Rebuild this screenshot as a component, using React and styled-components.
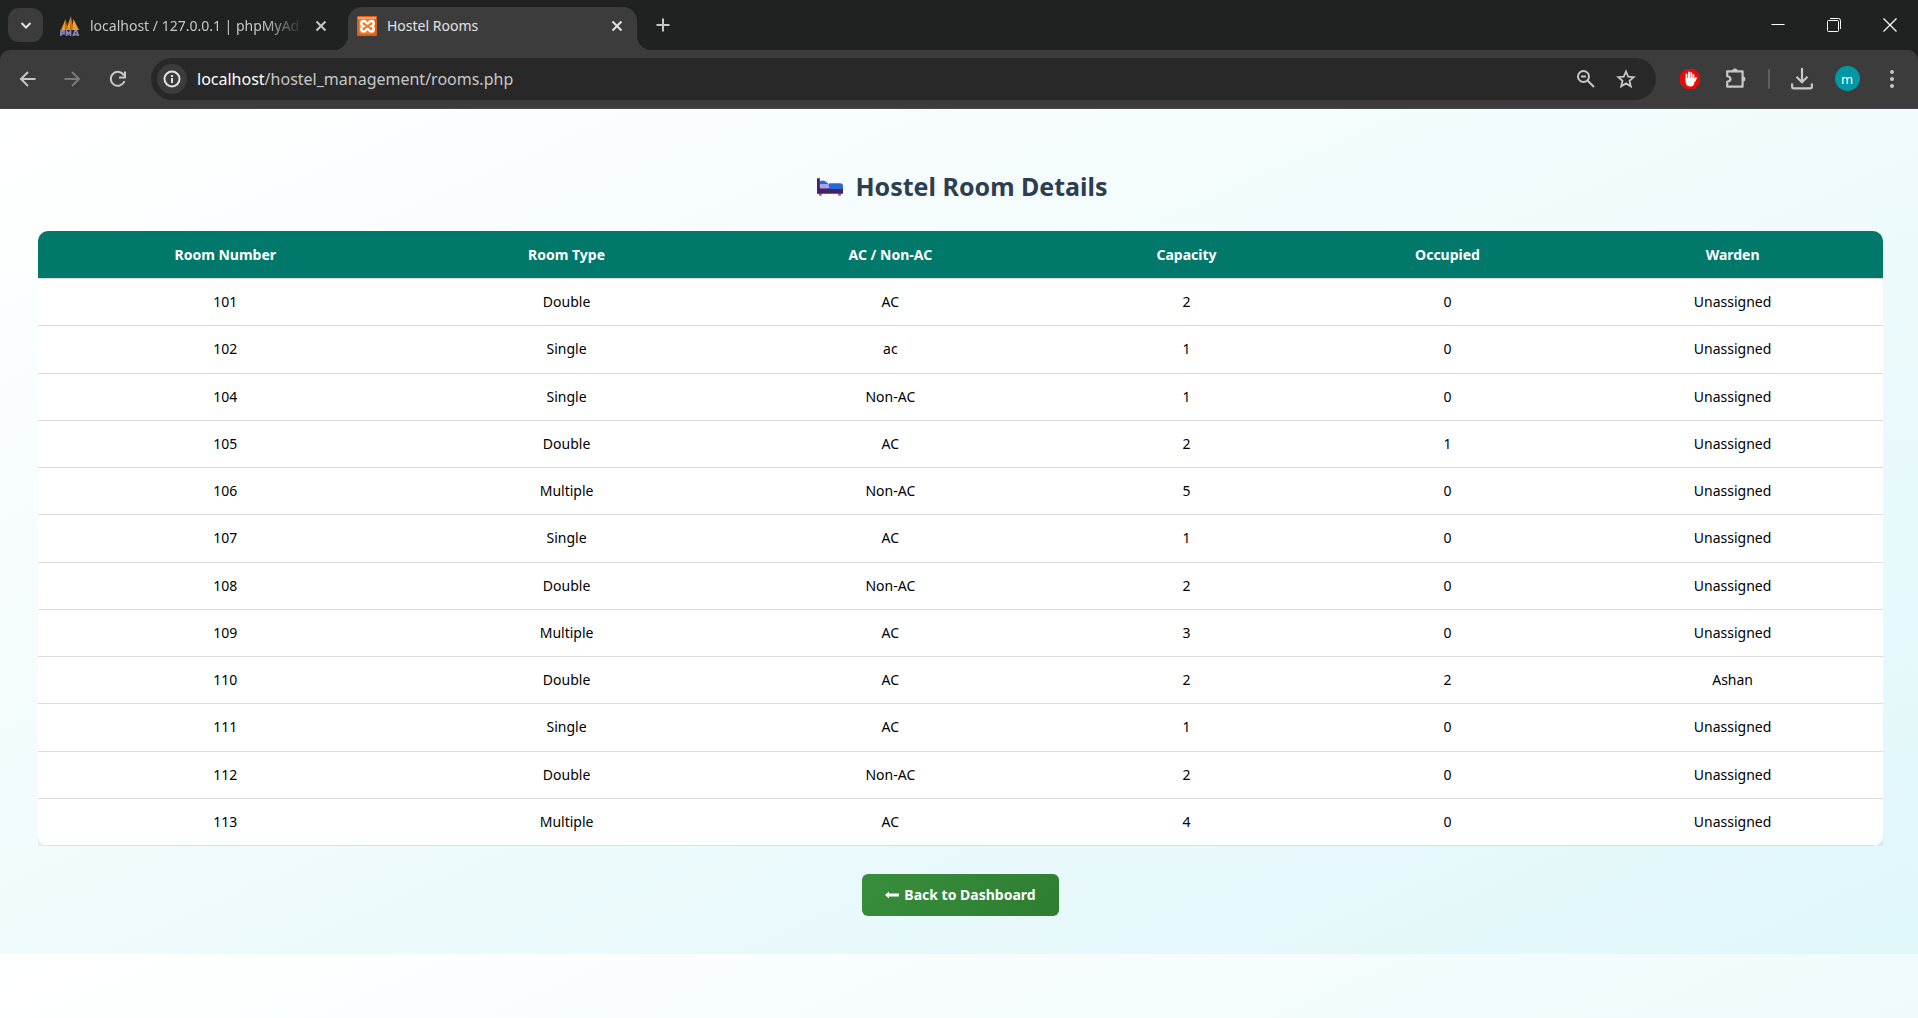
import React from 'react';
import styled, { createGlobalStyle } from 'styled-components';

const uiFont = '"Noto Sans", "Open Sans", sans-serif';

const GlobalStyle = createGlobalStyle`
  *, *::before, *::after { box-sizing: border-box; }
  html, body { margin: 0; min-height: 100%; }
  body { font-family: ${uiFont}; background: #fff; }
  button, input { font: inherit; }
`;

const Browser = styled.div`
  display: flex;
  flex-direction: column;
  min-height: 100vh;
`;

const TabStrip = styled.header`
  display: flex;
  align-items: flex-end;
  height: 50px;
  padding-left: 8px;
  background: #202221;
`;

const IconButton = styled.button`
  display: flex;
  flex: none;
  align-items: center;
  justify-content: center;
  width: ${(p) => p.$w || 44}px;
  height: ${(p) => p.$h || 34}px;
  padding: 0;
  border: 0;
  border-radius: ${(p) => p.$radius || 17}px;
  background: ${(p) => p.$bg || 'transparent'};
  color: ${(p) => p.$color || '#c7c7c7'};
`;

const TabSearch = styled.div`
  align-self: center;
  margin-right: 8px;
`;

const Tab = styled.div`
  position: relative;
  display: flex;
  align-items: center;
  width: ${(p) => p.$w}px;
  height: 43px;
  padding: 0 4px 6px 9px;
  border-radius: 14px 14px 0 0;
  background: ${(p) => (p.$active ? '#3c3c3c' : 'transparent')};
  color: ${(p) => (p.$active ? '#e3e3e3' : '#c7c7c7')};

  &::before, &::after {
    content: ${(p) => (p.$active ? '""' : 'none')};
    position: absolute;
    bottom: 0;
    width: 14px;
    height: 14px;
  }
  &::before {
    right: 100%;
    background: radial-gradient(circle at 0 0, transparent 14px, #3c3c3c 14px);
  }
  &::after {
    left: 100%;
    background: radial-gradient(circle at 100% 0, transparent 14px, #3c3c3c 14px);
  }
`;

const TabTitle = styled.span`
  flex: 1;
  min-width: 0;
  margin-left: 10px;
  font-size: 14px;
  line-height: 20px;
  white-space: nowrap;
  mask-image: ${(p) => (p.$fade ? 'linear-gradient(90deg, #000 84%, rgba(0, 0, 0, 0.15))' : 'none')};
`;

const WindowControls = styled.div`
  display: flex;
  align-self: flex-start;
  margin-left: auto;
`;

const Toolbar = styled.nav`
  display: flex;
  align-items: center;
  height: 59px;
  padding: 0 4px 1px 6px;
  border-bottom: 1px solid #4a4648;
  border-radius: 10px 10px 0 0;
  background: #3c3c3c;
`;

const ToolbarBack = styled.div`
  background: #202221;
`;

const AddressBar = styled.form`
  display: flex;
  flex: 1;
  align-items: center;
  height: 42px;
  margin: 0 12px 0 10px;
  padding: 0 10px 0 6px;
  border-radius: 21px;
  background: #282828;
`;

const AddressField = styled.label`
  position: relative;
  flex: 1;
  height: 24px;
  margin-left: 10px;
  font-size: 16px;
  line-height: 24px;
`;

const AddressInput = styled.input`
  position: absolute;
  inset: 0;
  width: 100%;
  padding: 0;
  border: 0;
  outline: 0;
  background: transparent;
  color: transparent;
`;

const AddressText = styled.span`
  color: #c7c7c7;
  b { color: #fff; font-weight: 400; }
`;

const Divider = styled.span`
  width: 2px;
  height: 20px;
  margin: 0 10px 0 8px;
  border-radius: 1px;
  background: #5f5f5f;
`;

const Avatar = styled.span`
  display: grid;
  place-items: center;
  width: 25px;
  height: 25px;
  border-radius: 50%;
  background: #0097a7;
  color: #fff;
  font-size: 13px;
  line-height: 24px;
`;

const Viewport = styled.div`
  flex: 1;
  display: flex;
  flex-direction: column;
  background: #fff;
`;

const wash = 'linear-gradient(to bottom right, #ffffff, #e0f7fa)';

const Page = styled.main`
  padding: 59px 35px 38px 38px;
  background: ${wash};
`;

const Below = styled.div`
  flex: 1;
  background: ${wash} top / 100% 845px no-repeat;
`;

const Title = styled.h1`
  display: flex;
  align-items: center;
  justify-content: center;
  gap: 12px;
  margin: 0 0 27px;
  padding-left: 4px;
  color: #2c3e50;
  font-size: 25px;
  font-weight: 700;
  line-height: 36px;
`;

const TableFrame = styled.div`
  border-radius: 10px 10px 0 0;
  background: rgba(0, 0, 0, 0.05);
`;

const RoomTable = styled.table`
  width: 100%;
  height: 615px;
  overflow: hidden;
  border-collapse: separate;
  border-spacing: 0;
  border-radius: 10px;
  background: #fff;
  table-layout: fixed;
`;

const Column = styled.col`
  width: ${(p) => p.$share}%;
`;

const HeadCell = styled.th`
  padding: 14px 12px 13px;
  border-bottom: 1px solid #ddd;
  background: #00796b;
  background-clip: padding-box;
  color: #fff;
  font-size: 14px;
  font-weight: 700;
  line-height: 20px;
`;

const Cell = styled.td`
  padding: 13px 12px;
  border-bottom: 1px solid #ddd;
  color: #000;
  font-size: 14px;
  line-height: 20px;
  text-align: center;
`;

const Actions = styled.div`
  display: flex;
  justify-content: center;
  margin-top: 28px;
`;

const BackLink = styled.a`
  display: flex;
  align-items: center;
  gap: 5px;
  padding: 11px 23px;
  border-radius: 6px;
  background: linear-gradient(135deg, #388e3c, #2e7d32);
  color: #fff;
  font-size: 14px;
  font-weight: 700;
  line-height: 20px;
  text-decoration: none;
`;

const Glyph = ({ size = 20, width = 2, children }) => (
  <svg width={size} height={size} viewBox="0 0 20 20" fill="none" stroke="currentColor" strokeWidth={width} aria-hidden="true">
    {children}
  </svg>
);

const CloseGlyph = () => <Glyph><path d="M5.500 5.500l9 9M14.500 5.500l-9 9" /></Glyph>;

const SailLogo = () => (
  <svg width="20" height="20" viewBox="0 0 20 20" aria-hidden="true">
    <path d="M1 14L5.500 3L5 14zM6 14L11 0L10.500 14zM11.500 14L13.500 3L19 14z" fill="#f59a23" />
    <path d="M5.500 3L5 14L8 13zM11 0L10.500 14L13 13z" fill="#c9741a" />
    <path d="M1 20v-5h3v2.500H1M6.500 20v-5l2 3l2-3v5M13 20l2-5h1.500l2 5M14 18.500h4" fill="none" stroke="#8385b5" strokeWidth="1.800" />
  </svg>
);

const XamppLogo = () => (
  <svg width="20" height="20" viewBox="0 0 20 20" aria-hidden="true">
    <rect width="20" height="20" rx="1" fill="#d9601c" />
    <rect x="2" y="2" width="16" height="16" rx="2" fill="#fb7a24" />
    <path d="M1 1h18v2H1z" fill="#f3a06a" />
    <path d="M7 5C3.500 5 3.500 9 6 10.200C3.500 11.500 3.500 15.500 7 15.500C9 15.500 9 13 10.500 13C12 13 12 15.500 14 15.500C17.500 15.500 17.500 11.500 15 10.200C17.500 9 17.500 5 14 5C12 5 12 7.500 10.500 7.500C9 7.500 9 5 7 5z" fill="none" stroke="#fff" strokeWidth="2.400" />
  </svg>
);

const BedIcon = () => (
  <svg width="26" height="19" viewBox="0 0 27 19" aria-hidden="true">
    <path d="M2 16h3v3H2zM22 16h3v3h-3z" fill="#8a68b5" />
    <path d="M0 1h3v10h24v6H0z" fill="#46216b" />
    <path d="M3 4q4-2 7 1l2 2v2H3z" fill="#2569d8" />
    <path d="M12 7q0-1 2-1h10q3 0 3 3v3H12z" fill="#2569d8" />
    <rect x="3" y="7" width="9" height="4.500" rx="1" fill="#b3a0e3" />
  </svg>
);

const StopHand = () => (
  <svg width="22" height="22" viewBox="0 0 22 22" aria-hidden="true">
    <path d="M6.500 1h9L21 6.500v9L15.500 21h-9L1 15.500v-9z" fill="#e40d0d" />
    <path d="M7.500 13V6.500M10 11V4.500M12.300 11V5M14.500 12V7M15.500 13l1.500-3" stroke="#fff" strokeWidth="1.800" strokeLinecap="round" />
    <path d="M6.700 10h8.700v4c0 3-1.500 4.500-4 4.500s-4.700-1.500-4.700-4.500z" fill="#fff" />
  </svg>
);

const BackArrow = () => (
  <svg width="14" height="10" viewBox="0 0 14 10" aria-hidden="true">
    <path d="M0 5l4-3.500v2h10v3H4v2z" fill="#fff" />
  </svg>
);

const columns = [
  ['Room Number', 20.3],
  ['Room Type', 16.7],
  ['AC / Non-AC', 18.4],
  ['Capacity', 13.7],
  ['Occupied', 14.6],
  ['Warden', 16.3],
];

const rooms = [
  ['101', 'Double', 'AC', 2, 0, 'Unassigned'],
  ['102', 'Single', 'ac', 1, 0, 'Unassigned'],
  ['104', 'Single', 'Non-AC', 1, 0, 'Unassigned'],
  ['105', 'Double', 'AC', 2, 1, 'Unassigned'],
  ['106', 'Multiple', 'Non-AC', 5, 0, 'Unassigned'],
  ['107', 'Single', 'AC', 1, 0, 'Unassigned'],
  ['108', 'Double', 'Non-AC', 2, 0, 'Unassigned'],
  ['109', 'Multiple', 'AC', 3, 0, 'Unassigned'],
  ['110', 'Double', 'AC', 2, 2, 'Ashan'],
  ['111', 'Single', 'AC', 1, 0, 'Unassigned'],
  ['112', 'Double', 'Non-AC', 2, 0, 'Unassigned'],
  ['113', 'Multiple', 'AC', 4, 0, 'Unassigned'],
];

function Tabs() {
  return (
    <TabStrip>
      <TabSearch>
        <IconButton $w={35} $radius={11} $bg="#3c3c3c" $color="#e3e3e3" aria-label="Search tabs">
          <Glyph><path d="M5.500 8l4.500 4.500L14.500 8" /></Glyph>
        </IconButton>
      </TabSearch>
      <Tab $w={297}>
        <SailLogo />
        <TabTitle $fade>localhost / 127.0.0.1 | phpMyAd</TabTitle>
        <IconButton $w={46} $h={28} aria-label="Close tab"><CloseGlyph /></IconButton>
      </Tab>
      <Tab $w={289} $active>
        <XamppLogo />
        <TabTitle>Hostel Rooms</TabTitle>
        <IconButton $w={32} $h={28} $color="#e3e3e3" aria-label="Close tab"><CloseGlyph /></IconButton>
      </Tab>
      <TabSearch>
        <IconButton $w={52} aria-label="New tab"><Glyph><path d="M10 3.500v13M3.500 10h13" /></Glyph></IconButton>
      </TabSearch>
      <WindowControls>
        <IconButton $w={56} $h={49} $color="#fff" aria-label="Minimize"><Glyph width={1}><path d="M3.500 9.500h13" /></Glyph></IconButton>
        <IconButton $w={56} $h={49} $color="#fff" aria-label="Restore">
          <Glyph width={1}><rect x="3.500" y="5.500" width="11" height="11" rx="1" /><path d="M6 3.500h8.500q2 0 2 2V14" /></Glyph>
        </IconButton>
        <IconButton $w={56} $h={49} $color="#fff" aria-label="Close"><Glyph width={1.2}><path d="M3.500 3.500l13 13M16.500 3.500l-13 13" /></Glyph></IconButton>
      </WindowControls>
    </TabStrip>
  );
}

function Navigation() {
  return (
    <ToolbarBack>
      <Toolbar>
        <IconButton aria-label="Back"><Glyph><path d="M17.500 10H3.500M10 3l-7 7l7 7" /></Glyph></IconButton>
        <IconButton $color="#7b7b7b" aria-label="Forward"><Glyph><path d="M2.500 10h14M10 3l7 7l-7 7" /></Glyph></IconButton>
        <IconButton $w={47} aria-label="Reload"><Glyph><path d="M16.500 12A7 7 0 1 1 16 6.500M17 2.500v6h-6" /></Glyph></IconButton>
        <AddressBar onSubmit={(e) => e.preventDefault()}>
          <IconButton $w={30} $h={30} $bg="#3c3c3c" $color="#e3e3e3" type="button" aria-label="Site information">
            <Glyph><circle cx="10" cy="10" r="7.500" /><path d="M10 9v5M10 6v2" /></Glyph>
          </IconButton>
          <AddressField>
            <AddressText><b>localhost</b>/hostel_management/rooms.php</AddressText>
            <AddressInput type="text" aria-label="Address" />
          </AddressField>
          <IconButton $w={40} type="button" aria-label="Zoom"><Glyph><circle cx="7.500" cy="7.500" r="5.500" /><path d="M11.500 11.500l6.500 6.500M5 7.500h5" /></Glyph></IconButton>
          <IconButton $w={40} type="button" aria-label="Bookmark"><Glyph width={1.8}><path d="M10 2.500l2.200 5.200l5.500.5l-4.200 3.600l1.300 5.500L10 14.400l-4.800 2.900l1.300-5.500l-4.200-3.600l5.500-.5z" /></Glyph></IconButton>
        </AddressBar>
        <IconButton aria-label="Ad blocker"><StopHand /></IconButton>
        <IconButton $w={48} aria-label="Extensions">
          <Glyph size={22} width={2}><path d="M2 3h14v14H2v-4.500q3-.5 3-2.500t-3-2.500z" strokeLinejoin="round" /><path d="M6.500 3a2.500 2.500 0 0 1 5 0zM16 7.500a2.500 2.500 0 0 1 0 5z" fill="currentColor" stroke="none" /></Glyph>
        </IconButton>
        <Divider />
        <IconButton $w={44} aria-label="Downloads"><Glyph size={22}><path d="M10 0v13M5 8l5 5l5-5M1 14v3q0 1.500 1.500 1.500h15q1.500 0 1.500-1.500v-3" /></Glyph></IconButton>
        <IconButton $w={46} aria-label="Profile"><Avatar>m</Avatar></IconButton>
        <IconButton aria-label="Menu"><Glyph><g fill="currentColor" stroke="none"><circle cx="10" cy="3" r="2" /><circle cx="10" cy="10" r="2" /><circle cx="10" cy="17" r="2" /></g></Glyph></IconButton>
      </Toolbar>
    </ToolbarBack>
  );
}

function Rooms() {
  return (
    <TableFrame>
      <RoomTable>
        <colgroup>{columns.map(([name, share]) => <Column key={name} $share={share} />)}</colgroup>
        <thead>
          <tr>{columns.map(([name]) => <HeadCell key={name} scope="col">{name}</HeadCell>)}</tr>
        </thead>
        <tbody>
          {rooms.map((room) => (
            <tr key={room[0]}>{room.map((value, i) => <Cell key={columns[i][0]}>{value}</Cell>)}</tr>
          ))}
        </tbody>
      </RoomTable>
    </TableFrame>
  );
}

export default function App() {
  return (
    <Browser>
      <GlobalStyle />
      <Tabs />
      <Navigation />
      <Viewport>
        <Page>
          <Title><BedIcon />Hostel Room Details</Title>
          <Rooms />
          <Actions><BackLink href="#dashboard"><BackArrow />Back to Dashboard</BackLink></Actions>
        </Page>
        <Below />
      </Viewport>
    </Browser>
  );
}
